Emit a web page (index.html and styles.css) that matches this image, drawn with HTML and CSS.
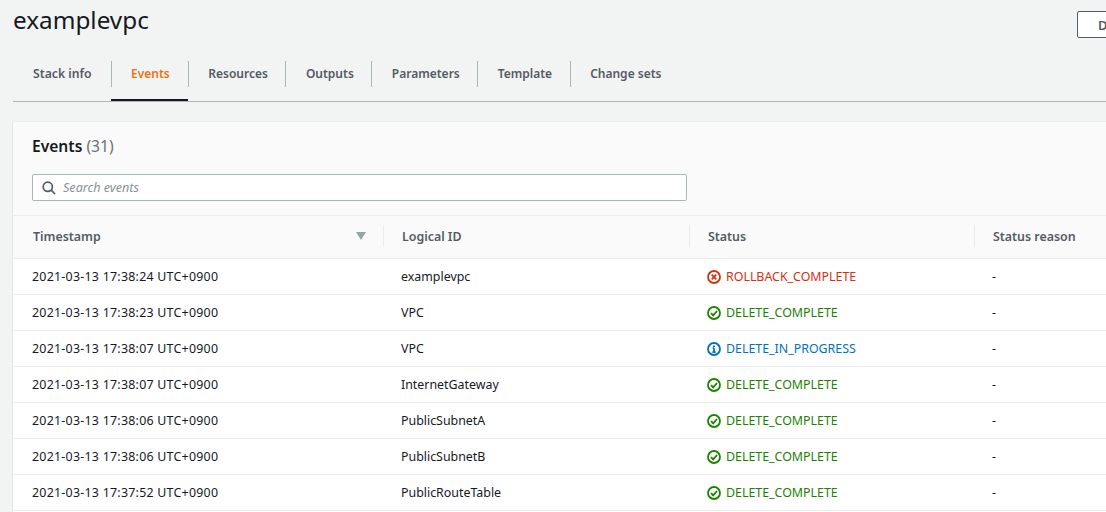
FILE: index.html
```html
<!DOCTYPE html>
<html lang="en">
<head>
    <meta charset="UTF-8">
    <meta name="viewport" content="width=device-width, initial-scale=1.0">
    <title>examplevpc - Events</title>
    <link rel="stylesheet" href="styles.css">
</head>
<body>
    <div class="page">
        <div class="page-head">
            <h1>examplevpc</h1>
            <button class="delete-btn">Delete</button>
        </div>

        <div class="tabs">
            <a class="tab">Stack info</a>
            <a class="tab active">Events</a>
            <a class="tab">Resources</a>
            <a class="tab">Outputs</a>
            <a class="tab">Parameters</a>
            <a class="tab">Template</a>
            <a class="tab">Change sets</a>
        </div>

        <div class="card">
            <div class="card-head">
                <h2>Events <span class="count">(31)</span></h2>
                <div class="search">
                    <svg class="search-icon" width="14" height="14" viewBox="0 0 14 14"><circle cx="5.8" cy="5.8" r="4.6"/><path d="M9.2 9.2 13 13"/></svg>
                    <span>Search events</span>
                </div>
            </div>

            <div class="row header">
                <div class="cell time">Timestamp<svg class="sort" width="10" height="8" viewBox="0 0 10 8"><path d="M0 0h10L5 8z"/></svg></div>
                <div class="cell logical">Logical ID</div>
                <div class="cell status">Status</div>
                <div class="cell reason">Status reason</div>
            </div>

            <div class="row">
                <div class="cell time">2021-03-13 17:38:24 UTC+0900</div>
                <div class="cell logical">examplevpc</div>
                <div class="cell status red"><svg class="ico" width="14" height="14" viewBox="0 0 14 14"><circle cx="7" cy="7" r="6"/><path d="M4.7 4.7l4.6 4.6M9.3 4.7 4.7 9.3"/></svg>ROLLBACK_COMPLETE</div>
                <div class="cell reason">-</div>
            </div>
            <div class="row">
                <div class="cell time">2021-03-13 17:38:23 UTC+0900</div>
                <div class="cell logical">VPC</div>
                <div class="cell status green"><svg class="ico" width="14" height="14" viewBox="0 0 14 14"><circle cx="7" cy="7" r="6"/><path d="M4 7.2l2.2 2.2L10 5"/></svg>DELETE_COMPLETE</div>
                <div class="cell reason">-</div>
            </div>
            <div class="row">
                <div class="cell time">2021-03-13 17:38:07 UTC+0900</div>
                <div class="cell logical">VPC</div>
                <div class="cell status blue"><svg class="ico" width="14" height="14" viewBox="0 0 14 14"><circle cx="7" cy="7" r="6"/><path d="M7 6.2v4M5.4 10.2h3.2M5.6 6.2H7M7 3.4v1.6"/></svg>DELETE_IN_PROGRESS</div>
                <div class="cell reason">-</div>
            </div>
            <div class="row">
                <div class="cell time">2021-03-13 17:38:07 UTC+0900</div>
                <div class="cell logical">InternetGateway</div>
                <div class="cell status green"><svg class="ico" width="14" height="14" viewBox="0 0 14 14"><circle cx="7" cy="7" r="6"/><path d="M4 7.2l2.2 2.2L10 5"/></svg>DELETE_COMPLETE</div>
                <div class="cell reason">-</div>
            </div>
            <div class="row">
                <div class="cell time">2021-03-13 17:38:06 UTC+0900</div>
                <div class="cell logical">PublicSubnetA</div>
                <div class="cell status green"><svg class="ico" width="14" height="14" viewBox="0 0 14 14"><circle cx="7" cy="7" r="6"/><path d="M4 7.2l2.2 2.2L10 5"/></svg>DELETE_COMPLETE</div>
                <div class="cell reason">-</div>
            </div>
            <div class="row">
                <div class="cell time">2021-03-13 17:38:06 UTC+0900</div>
                <div class="cell logical">PublicSubnetB</div>
                <div class="cell status green"><svg class="ico" width="14" height="14" viewBox="0 0 14 14"><circle cx="7" cy="7" r="6"/><path d="M4 7.2l2.2 2.2L10 5"/></svg>DELETE_COMPLETE</div>
                <div class="cell reason">-</div>
            </div>
            <div class="row">
                <div class="cell time">2021-03-13 17:37:52 UTC+0900</div>
                <div class="cell logical">PublicRouteTable</div>
                <div class="cell status green"><svg class="ico" width="14" height="14" viewBox="0 0 14 14"><circle cx="7" cy="7" r="6"/><path d="M4 7.2l2.2 2.2L10 5"/></svg>DELETE_COMPLETE</div>
                <div class="cell reason">-</div>
            </div>
        </div>
    </div>
</body>
</html>
```

FILE: styles.css
```css
* {
    margin: 0;
    padding: 0;
    box-sizing: border-box;
}

html, body {
    height: 512px;
    overflow: hidden;
}

body {
    font-family: "Noto Sans", Arial, sans-serif;
    font-size: 12.4px;
    color: #16191f;
    background: #f2f3f3;
}

.page {
    width: 1300px;
    padding-left: 13px;
}

.page-head {
    display: flex;
    justify-content: space-between;
    height: 60px;
    width: 1287px;
}

.page-head h1 {
    font-size: 24.3px;
    font-weight: 400;
    line-height: 32px;
    height: 32px;
    margin-top: 4px;
}

.delete-btn {
    width: 100px;
    height: 27px;
    margin-top: 11px;
    margin-right: 123px;
    padding: 0 20px;
    text-align: left;
    background: #fff;
    border: 1px solid #545b64;
    border-radius: 2px;
    font-family: inherit;
    font-size: 13px;
    font-weight: 600;
    color: #545b64;
}

.tabs {
    display: flex;
    height: 42px;
    border-bottom: 1px solid #aab7b8;
    width: 1287px;
}

.tab {
    position: relative;
    display: flex;
    align-items: center;
    height: 41px;
    padding: 0 17.5px 14px 20.5px;
    font-size: 12px;
    font-weight: 600;
    color: #545b64;
}

.tab:first-child {
    width: 98px;
    padding-left: 20px;
    font-size: 12.2px;
}

.tab + .tab::before {
    content: "";
    position: absolute;
    left: 0;
    top: 1px;
    height: 26px;
    width: 1px;
    background: #aab7b8;
}

.tab.active {
    padding-left: 20px;
    padding-right: 18px;
    color: #ec7211;
    box-shadow: inset 0 -2px 0 #16191f;
}

.card {
    margin-top: 20px;
    width: 1287px;
    min-height: 391px;
    background: #fff;
    box-shadow: 0 -1px 0 #eaeded, -1px 0 0 #e4e6e6;
}

.card-head {
    background: #fafafa;
    height: 94px;
    padding: 13px 19px 0;
    border-bottom: 1px solid #eaeded;
}

.card-head h2 {
    font-size: 15.6px;
    font-weight: 600;
    line-height: 22px;
}

.count {
    font-weight: 400;
    color: #687078;
}

.search {
    display: flex;
    align-items: center;
    gap: 7px;
    width: 655px;
    height: 27px;
    margin-top: 17px;
    padding-left: 9px;
    background: #fff;
    border: 1px solid #aab7b8;
    border-radius: 2px;
    font-size: 12.6px;
    font-style: italic;
    color: #879596;
}

.search-icon {
    fill: none;
    stroke: #545b64;
    stroke-width: 1.7;
}

.row {
    display: grid;
    grid-template-columns: 370px 306px 285px 1fr;
    align-items: center;
    height: 36px;
    border-bottom: 1px solid #eaeded;
}

.row.header {
    height: 43px;
    padding-bottom: 2px;
    background: #fafafa;
    font-weight: 600;
    color: #545b64;
}

.cell {
    position: relative;
    display: flex;
    align-items: center;
    padding-left: 18px;
}

.cell.time {
    padding-left: 19px;
    letter-spacing: 0.25px;
}

.header .cell {
    padding-left: 19px;
    height: 22px;
    letter-spacing: 0;
}

.header .cell.time {
    padding-left: 20px;
}

.header .cell + .cell::before {
    content: "";
    position: absolute;
    left: 0;
    top: 0;
    height: 22px;
    width: 1px;
    background: #eaeded;
}

.sort {
    margin-left: auto;
    margin-right: 17px;
    fill: #95a5a6;
}

.ico {
    fill: none;
    stroke: currentColor;
    stroke-width: 1.8;
    margin-right: 5px;
    flex: none;
}

.red { color: #d13212; }
.green { color: #1d8102; }
.blue { color: #0073bb; }
```
